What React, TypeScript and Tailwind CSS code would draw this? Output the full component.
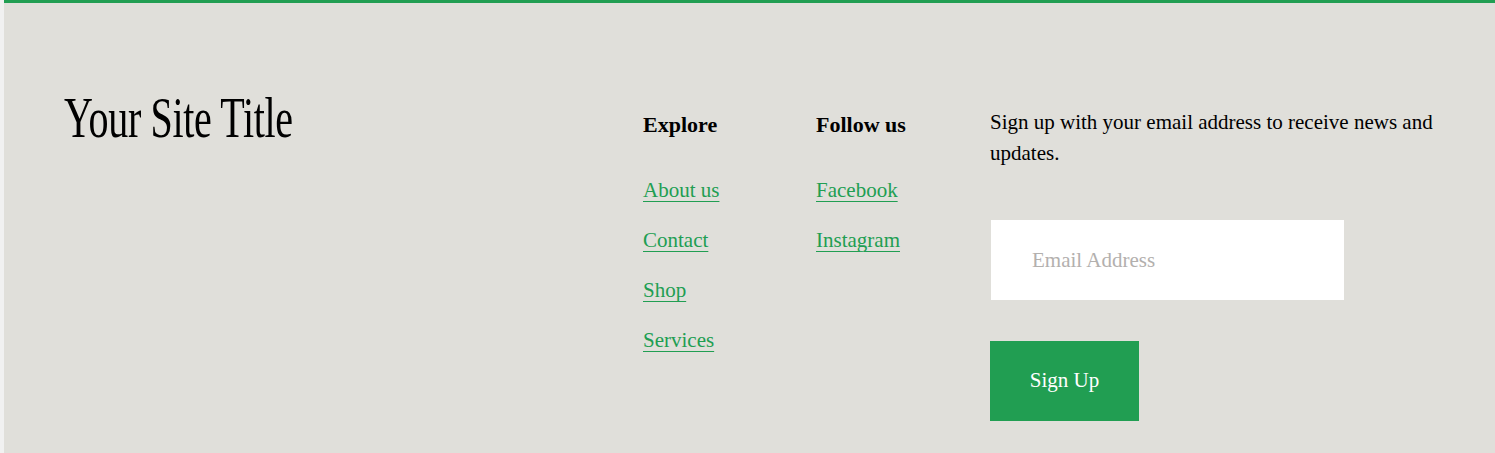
const explore = ["About us", "Contact", "Shop", "Services"];
const follow = ["Facebook", "Instagram"];

function LinkColumn({ title, links }: { title: string; links: string[] }) {
  return (
    <div className="flex flex-col">
      <h3 className="text-[22px] font-bold leading-[30px] text-black">{title}</h3>
      <ul className="mt-[35px] flex flex-col gap-[20px]">
        {links.map((l) => (
          <li key={l} className="flex h-[30px]">
            <a
              href="#"
              className="text-[21px] leading-[30px] text-[#219e52] underline decoration-1 underline-offset-[4px]"
            >
              {l}
            </a>
          </li>
        ))}
      </ul>
    </div>
  );
}

export default function App() {
  return (
    <div className="flex h-[453px] w-full bg-[#f1f1f1] pl-[4px]">
      <footer
        className="flex flex-1 border-t-[3px] border-[#219e52] bg-[#e0dfda] pl-[60px] pt-[83px]"
        style={{ fontFamily: '"Liberation Serif", serif' }}
      >
        <div className="w-[579px]">
          <h2 className="mt-[2px] origin-left scale-x-[0.69] whitespace-nowrap text-[58px] leading-[60px] tracking-[-0.5px] text-black">
            Your Site Title
          </h2>
        </div>
        <div className="mt-[24px] w-[173px]">
          <LinkColumn title="Explore" links={explore} />
        </div>
        <div className="mt-[24px] w-[174px]">
          <LinkColumn title="Follow us" links={follow} />
        </div>
        <div className="mt-[21px] w-[460px]">
          <p className="text-[21px] leading-[31px] text-black">
            Sign up with your email address to receive news and updates.
          </p>
          <input
            type="email"
            placeholder="Email Address"
            className="mt-[51px] ml-px block h-[80px] w-[353px] bg-white px-[41px] text-[21px] text-black placeholder:text-[#b3b0ae] focus:outline-none"
          />
          <button className="mt-[41px] h-[80px] w-[149px] bg-[#219e52] text-[21px] text-white">
            Sign Up
          </button>
        </div>
      </footer>
    </div>
  );
}
